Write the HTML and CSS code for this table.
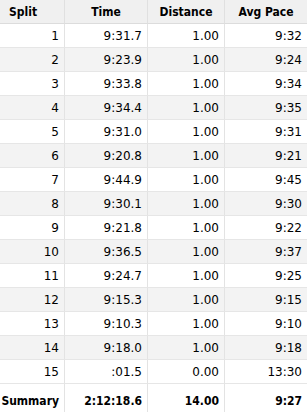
FILE: index.html
```html
<!DOCTYPE html>
<html>
<head>
<meta charset="utf-8">
<link rel="stylesheet" href="styles.css">
</head>
<body>
<div class="table">
  <div class="row head">
    <div class="cell first">Split</div>
    <div class="cell center">Time</div>
    <div class="cell center">Distance</div>
    <div class="cell center">Avg Pace</div>
  </div>
  <div class="row"><div class="cell">1</div><div class="cell">9:31.7</div><div class="cell">1.00</div><div class="cell">9:32</div></div>
  <div class="row alt"><div class="cell">2</div><div class="cell">9:23.9</div><div class="cell">1.00</div><div class="cell">9:24</div></div>
  <div class="row"><div class="cell">3</div><div class="cell">9:33.8</div><div class="cell">1.00</div><div class="cell">9:34</div></div>
  <div class="row alt"><div class="cell">4</div><div class="cell">9:34.4</div><div class="cell">1.00</div><div class="cell">9:35</div></div>
  <div class="row"><div class="cell">5</div><div class="cell">9:31.0</div><div class="cell">1.00</div><div class="cell">9:31</div></div>
  <div class="row alt"><div class="cell">6</div><div class="cell">9:20.8</div><div class="cell">1.00</div><div class="cell">9:21</div></div>
  <div class="row"><div class="cell">7</div><div class="cell">9:44.9</div><div class="cell">1.00</div><div class="cell">9:45</div></div>
  <div class="row alt"><div class="cell">8</div><div class="cell">9:30.1</div><div class="cell">1.00</div><div class="cell">9:30</div></div>
  <div class="row"><div class="cell">9</div><div class="cell">9:21.8</div><div class="cell">1.00</div><div class="cell">9:22</div></div>
  <div class="row alt"><div class="cell">10</div><div class="cell">9:36.5</div><div class="cell">1.00</div><div class="cell">9:37</div></div>
  <div class="row"><div class="cell">11</div><div class="cell">9:24.7</div><div class="cell">1.00</div><div class="cell">9:25</div></div>
  <div class="row alt"><div class="cell">12</div><div class="cell">9:15.3</div><div class="cell">1.00</div><div class="cell">9:15</div></div>
  <div class="row"><div class="cell">13</div><div class="cell">9:10.3</div><div class="cell">1.00</div><div class="cell">9:10</div></div>
  <div class="row alt"><div class="cell">14</div><div class="cell">9:18.0</div><div class="cell">1.00</div><div class="cell">9:18</div></div>
  <div class="row"><div class="cell">15</div><div class="cell">:01.5</div><div class="cell">0.00</div><div class="cell">13:30</div></div>
  <div class="row summary"><div class="cell">Summary</div><div class="cell">2:12:18.6</div><div class="cell">14.00</div><div class="cell">9:27</div></div>
</div>
</body>
</html>
```

FILE: styles.css
```css
html, body {
  margin: 0;
  padding: 0;
  background: #ffffff;
}
body {
  font-family: "DejaVu Sans", "Liberation Sans", sans-serif;
  font-size: 12px;
  color: #000;
  overflow: hidden;
}
.table {
  width: 307px;
}
.row {
  display: grid;
  grid-template-columns: 65px 83px 77px 82px;
  height: 24px;
  background: #ffffff;
}
.row.alt {
  background: #f3f3f3;
}
.cell {
  box-sizing: border-box;
  height: 24px;
  border-right: 1px solid #e3e3e3;
  border-bottom: 1px solid #e6e6e6;
  display: flex;
  align-items: center;
  justify-content: flex-end;
  padding-right: 5px;
  white-space: nowrap;
}
.cell:last-child {
  border-right: none;
}
.head {
  background: #f0f0f0;
  font-weight: bold;
  font-stretch: condensed;
  font-family: "DejaVu Sans Condensed", "DejaVu Sans", sans-serif;
}
.head .cell {
  border-bottom: 1px solid #dcdcdc;
  border-right-color: #e0e0e0;
}
.head .cell.first {
  justify-content: flex-start;
  padding-left: 9px;
}
.head .cell.center {
  justify-content: center;
  padding-right: 0;
}
.summary {
  height: 31px;
  font-weight: bold;
  font-family: "DejaVu Sans Condensed", "DejaVu Sans", sans-serif;
}
.summary .cell {
  height: 31px;
  padding-top: 2px;
  border-bottom: none;
}
```
